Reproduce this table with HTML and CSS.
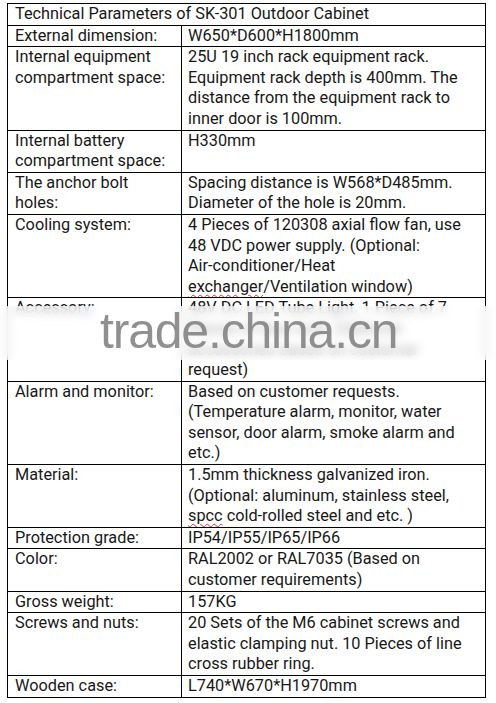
FILE: index.html
```html
<!DOCTYPE html>
<html>
<head>
<meta charset="utf-8">
<link rel="stylesheet" href="styles.css">
</head>
<body>
<div class="page">
  <table class="spec">
    <colgroup><col class="c1"><col class="c2"></colgroup>
    <tr><td colspan="2">Technical Parameters of SK-301 Outdoor Cabinet</td></tr>
    <tr><td>External dimension:</td><td>W650*D600*H1800mm</td></tr>
    <tr><td>Internal equipment<br>compartment space:</td><td>25U 19 inch rack equipment rack.<br>Equipment rack depth is 400mm. The<br>distance from the equipment rack to<br>inner door is 100mm.</td></tr>
    <tr><td>Internal battery<br>compartment space:</td><td>H330mm</td></tr>
    <tr><td>The anchor bolt<br>holes:</td><td>Spacing distance is W568*D485mm.<br>Diameter of the hole is 20mm.</td></tr>
    <tr><td>Cooling system:</td><td>4 Pieces of 120308 axial flow fan, use<br>48 VDC power supply. (Optional:<br>Air-conditioner/Heat<br><span class="sp">exchanger</span>/Ventilation window)</td></tr>
    <tr><td>Accessory:</td><td>48V DC LED Tube Light, 1 Piece of 7<br>Pieces of door lock. (Optional<br>accessories based on customer<br>request)</td></tr>
    <tr><td>Alarm and monitor:</td><td>Based on customer requests.<br>(Temperature alarm, monitor, water<br>sensor, door alarm, smoke alarm and<br>etc.)</td></tr>
    <tr><td>Material:</td><td>1.5mm thickness galvanized iron.<br>(Optional: aluminum, stainless steel,<br><span class="sp">spcc</span> cold-rolled steel and etc. )</td></tr>
    <tr><td>Protection grade:</td><td>IP54/IP55/IP65/IP66</td></tr>
    <tr><td>Color:</td><td>RAL2002 or RAL7035 (Based on<br>customer requirements)</td></tr>
    <tr><td>Gross weight:</td><td>157KG</td></tr>
    <tr><td>Screws and nuts:</td><td>20 Sets of the M6 cabinet screws and<br>elastic clamping nut. 10 Pieces of line<br>cross rubber ring.</td></tr>
    <tr><td>Wooden case:</td><td>L740*W670*H1970mm</td></tr>
  </table>
  <div class="band"></div>
  <div class="mark">trade.china.cn</div>
</div>
</body>
</html>
```

FILE: styles.css
```css
html, body {
  margin: 0;
  padding: 0;
  background: #fff;
}
.page {
  position: relative;
  width: 496px;
  height: 703px;
  padding: 3px 0 0 7px;
  box-sizing: border-box;
  overflow: hidden;
}
.spec {
  border-collapse: collapse;
  width: 479px;
  table-layout: fixed;
  font-family: Roboto, "Liberation Sans", sans-serif;
  font-size: 16.3px;
  color: #181818;
}
.c1 { width: 174px; }
.spec td {
  border: 1px solid #000;
  padding: 0 4px 0 7px;
  line-height: 20.6px;
  vertical-align: top;
  white-space: nowrap;
  overflow: hidden;
}
.spec td + td {
  padding-left: 6px;
}
.sp {
  text-decoration: underline wavy #d33;
  text-decoration-thickness: 1px;
  text-underline-offset: 2px;
}
.band {
  position: absolute;
  left: 0;
  top: 306px;
  width: 496px;
  height: 54px;
  background: rgba(255,255,255,0.65);
  backdrop-filter: blur(5px);
  -webkit-backdrop-filter: blur(5px);
}
.mark {
  position: absolute;
  left: 100px;
  top: 301px;
  font-family: "Liberation Sans", Arial, sans-serif;
  font-size: 50px;
  line-height: 60px;
  letter-spacing: -1.2px;
  color: rgba(125,125,125,0.85);
}
```
